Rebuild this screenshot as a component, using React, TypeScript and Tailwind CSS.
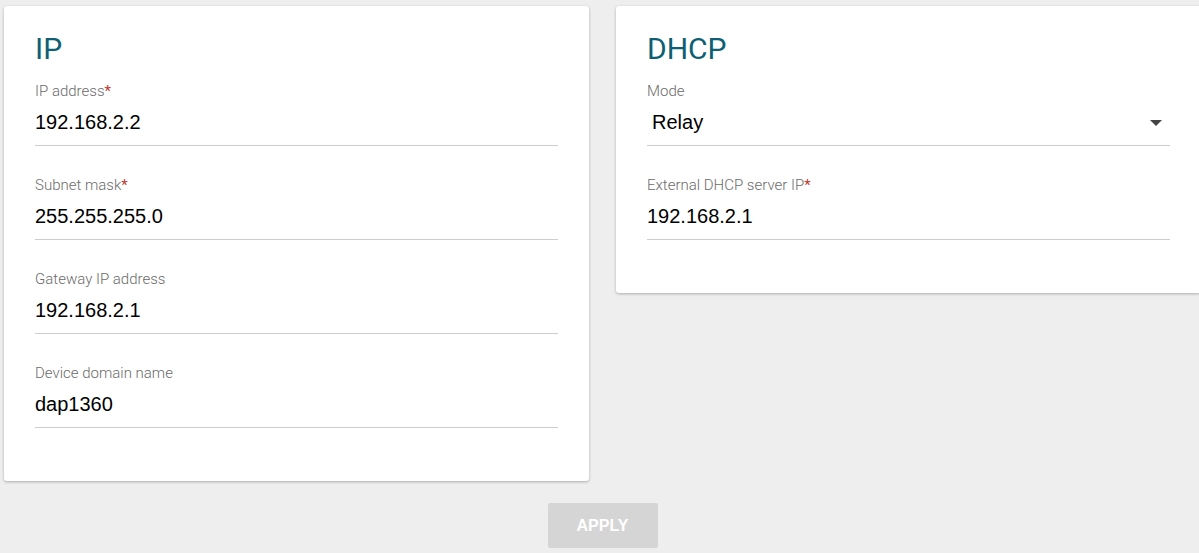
import React from 'react';

type Field = { label: string; value: string; required?: boolean; select?: boolean };

const ipFields: Field[] = [
  { label: 'IP address', value: '192.168.2.2', required: true },
  { label: 'Subnet mask', value: '255.255.255.0', required: true },
  { label: 'Gateway IP address', value: '192.168.2.1' },
  { label: 'Device domain name', value: 'dap1360' },
];

const dhcpFields: Field[] = [
  { label: 'Mode', value: 'Relay', select: true },
  { label: 'External DHCP server IP', value: '192.168.2.1', required: true },
];

function FieldRow({ field, first }: { field: Field; first: boolean }) {
  return (
    <div className={first ? 'mt-[14px]' : 'mt-[29px]'}>
      <div className="text-[15px] leading-[20px] text-[#6b6b6b] font-['Roboto',sans-serif] font-light">
        {field.label}
        {field.required && <span className="text-[#c0392b] font-normal">*</span>}
      </div>
      <div className="mt-[7px] pb-[9px] border-b border-[#cdcdcd] flex items-center justify-between">
        <span
          className={
            "text-[20px] leading-[28px] text-black font-['Liberation_Sans',Arial,sans-serif]" +
            (field.select ? ' pl-[5px]' : '')
          }
        >
          {field.value}
        </span>
        {field.select && (
          <svg width="12" height="6" viewBox="0 0 12 6" className="mr-[8px] mt-[2px]">
            <path d="M0 0 L12 0 L6 6 Z" fill="#444444" />
          </svg>
        )}
      </div>
    </div>
  );
}

function Card({ title, fields }: { title: string; fields: Field[] }) {
  return (
    <div className="w-[585px] shrink-0 bg-white rounded-[3px] shadow-[0_1px_3px_rgba(0,0,0,0.28)] pt-[25px] px-[31px] pb-[53px]">
      <h2 className="text-[30px] leading-[36px] text-[#0e5f74] font-['Roboto',sans-serif]">{title}</h2>
      {fields.map((f, i) => (
        <FieldRow key={f.label} field={f} first={i === 0} />
      ))}
    </div>
  );
}

export default function App() {
  return (
    <div className="w-[1199px] h-[553px] overflow-hidden bg-[#eeeeee]">
      <div className="w-[1201px] pl-[4px] pt-[6px]">
        <div className="flex items-start gap-[27px]">
          <Card title="IP" fields={ipFields} />
          <Card title="DHCP" fields={dhcpFields} />
        </div>
        <div className="flex justify-center mt-[22px]">
          <button
            type="button"
            disabled
            className="w-[110px] h-[45px] rounded-[2px] bg-[#d5d5d5] text-white text-[16px] font-bold font-['Liberation_Sans',Arial,sans-serif]"
          >
            APPLY
          </button>
        </div>
      </div>
    </div>
  );
}
